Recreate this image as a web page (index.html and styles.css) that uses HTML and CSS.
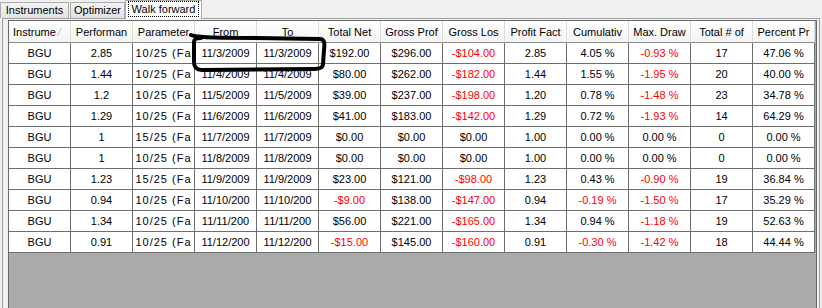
FILE: index.html
```html
<!DOCTYPE html>
<html lang="en">
<head>
    <meta charset="UTF-8">
    <title>Walk forward</title>
    <link rel="stylesheet" href="styles.css">
</head>
<body>
    <div class="tabs">
        <div class="tab tab-instruments">Instruments</div>
        <div class="tab tab-optimizer">Optimizer</div>
        <div class="tab tab-walk active"><span class="focus">Walk forward</span></div>
    </div>
    <div class="panel">
        <div class="grid">
            <table class="results">
                <thead>
                    <tr>
                        <th class="sorted">Instrume <span class="sort-glyph">&#8260;</span></th>
                        <th>Performan</th>
                        <th>Parameter</th>
                        <th>From</th>
                        <th>To</th>
                        <th>Total Net</th>
                        <th>Gross Prof</th>
                        <th>Gross Los</th>
                        <th>Profit Fact</th>
                        <th>Cumulativ</th>
                        <th>Max. Draw</th>
                        <th>Total # of</th>
                        <th>Percent Pr</th>
                    </tr>
                </thead>
                <tbody id="rows"></tbody>
            </table>
            <svg class="marker" width="150" height="48" viewBox="0 0 150 48">
                <path d="M5,5 C12,8 40,8 70,8 L134,9 C138,9 139,12 138,20 L137,34 C137,38 134,39 128,39 L16,40 C10,40 8,37 8,32 L8,12 C8,9 10,8 15,8" fill="none" stroke="#000" stroke-width="4" stroke-linecap="round" stroke-linejoin="round"/>
            </svg>
        </div>
    </div>

    <script>
        const rows = [
            ['BGU', '2.85', '10/25 (Fa', '11/3/2009', '11/3/2009', '$192.00', '$296.00', '-$104.00', '2.85', '4.05 %', '-0.93 %', '17', '47.06 %'],
            ['BGU', '1.44', '10/25 (Fa', '11/4/2009', '11/4/2009', '$80.00', '$262.00', '-$182.00', '1.44', '1.55 %', '-1.95 %', '20', '40.00 %'],
            ['BGU', '1.2', '10/25 (Fa', '11/5/2009', '11/5/2009', '$39.00', '$237.00', '-$198.00', '1.20', '0.78 %', '-1.48 %', '23', '34.78 %'],
            ['BGU', '1.29', '10/25 (Fa', '11/6/2009', '11/6/2009', '$41.00', '$183.00', '-$142.00', '1.29', '0.72 %', '-1.93 %', '14', '64.29 %'],
            ['BGU', '1', '15/25 (Fa', '11/7/2009', '11/7/2009', '$0.00', '$0.00', '$0.00', '1.00', '0.00 %', '0.00 %', '0', '0.00 %'],
            ['BGU', '1', '10/25 (Fa', '11/8/2009', '11/8/2009', '$0.00', '$0.00', '$0.00', '1.00', '0.00 %', '0.00 %', '0', '0.00 %'],
            ['BGU', '1.23', '15/25 (Fa', '11/9/2009', '11/9/2009', '$23.00', '$121.00', '-$98.00', '1.23', '0.43 %', '-0.90 %', '19', '36.84 %'],
            ['BGU', '0.94', '10/25 (Fa', '11/10/200', '11/10/200', '-$9.00', '$138.00', '-$147.00', '0.94', '-0.19 %', '-1.50 %', '17', '35.29 %'],
            ['BGU', '1.34', '10/25 (Fa', '11/11/200', '11/11/200', '$56.00', '$221.00', '-$165.00', '1.34', '0.94 %', '-1.18 %', '19', '52.63 %'],
            ['BGU', '0.91', '10/25 (Fa', '11/12/200', '11/12/200', '-$15.00', '$145.00', '-$160.00', '0.91', '-0.30 %', '-1.42 %', '18', '44.44 %']
        ];

        const body = document.getElementById('rows');
        rows.forEach(function(row) {
            const tr = document.createElement('tr');
            row.forEach(function(value, i) {
                const td = document.createElement('td');
                td.textContent = value;
                if (i === 2) td.className = 'param';
                // negative values are shown in red
                if (value.charAt(0) === '-') td.classList.add('negative');
                tr.appendChild(td);
            });
            body.appendChild(tr);
        });
    </script>
</body>
</html>
```

FILE: styles.css
```css
body {
    margin: 0;
    width: 822px;
    height: 308px;
    overflow: hidden;
    background-color: #f0f0f0;
    font-family: "Liberation Sans", Arial, sans-serif;
    font-size: 11px;
    color: #000;
}
.tabs {
    display: flex;
    align-items: flex-end;
    height: 18px;
    position: relative;
    z-index: 1;
}
.tab {
    box-sizing: border-box;
    height: 16px;
    line-height: 14px;
    text-align: center;
    border: 1px solid #acacac;
    border-bottom: none;
    background: linear-gradient(#f3f3f3, #e3e3e3);
    color: #000;
}
.tab-instruments {
    width: 69px;
}
.tab-optimizer {
    width: 55px;
    margin-left: 1px;
}
.tab-walk {
    width: 77px;
}
.tab.active {
    height: 19px;
    margin-bottom: -1px;
    background: #fff;
    padding-top: 1px;
}
.focus {
    display: inline-block;
    padding: 0 3px;
    line-height: 14px;
    outline: 1px dotted #000;
}
.panel {
    box-sizing: border-box;
    height: 290px;
    margin-left: 2px;
    width: 818px;
    border: 1px solid #a0a0a0;
    border-bottom: none;
    padding: 1px 2px 0 5px;
}
.grid {
    position: relative;
    height: 300px;
    border: 1px solid #6a6a6a;
    background-color: #ababab;
}
.results {
    border-collapse: separate;
    border-spacing: 0;
    table-layout: fixed;
    width: 806px;
}
.results th,
.results td {
    width: 61px;
    padding: 0;
    white-space: nowrap;
    overflow: hidden;
    text-align: center;
    font-weight: normal;
}
.results th {
    height: 21px;
    background: linear-gradient(#ffffff, #f4f4f4);
    border-right: 1px solid #dcdcdc;
    border-bottom: 1px solid #8a8a8a;
}
.results th.sorted {
    text-align: left;
    padding-left: 4px;
    width: 57px;
}
.sort-glyph {
    color: #b4b4b4;
    font-size: 10px;
}
.results td {
    height: 20px;
    background-color: #fff;
    border-right: 1px solid #6e6e6e;
    border-bottom: 1px solid #6e6e6e;
}
.results td.param {
    letter-spacing: 1px;
}
.results td.negative {
    color: #ff0000;
}
.marker {
    position: absolute;
    left: 177px;
    top: 9px;
    pointer-events: none;
}
```
